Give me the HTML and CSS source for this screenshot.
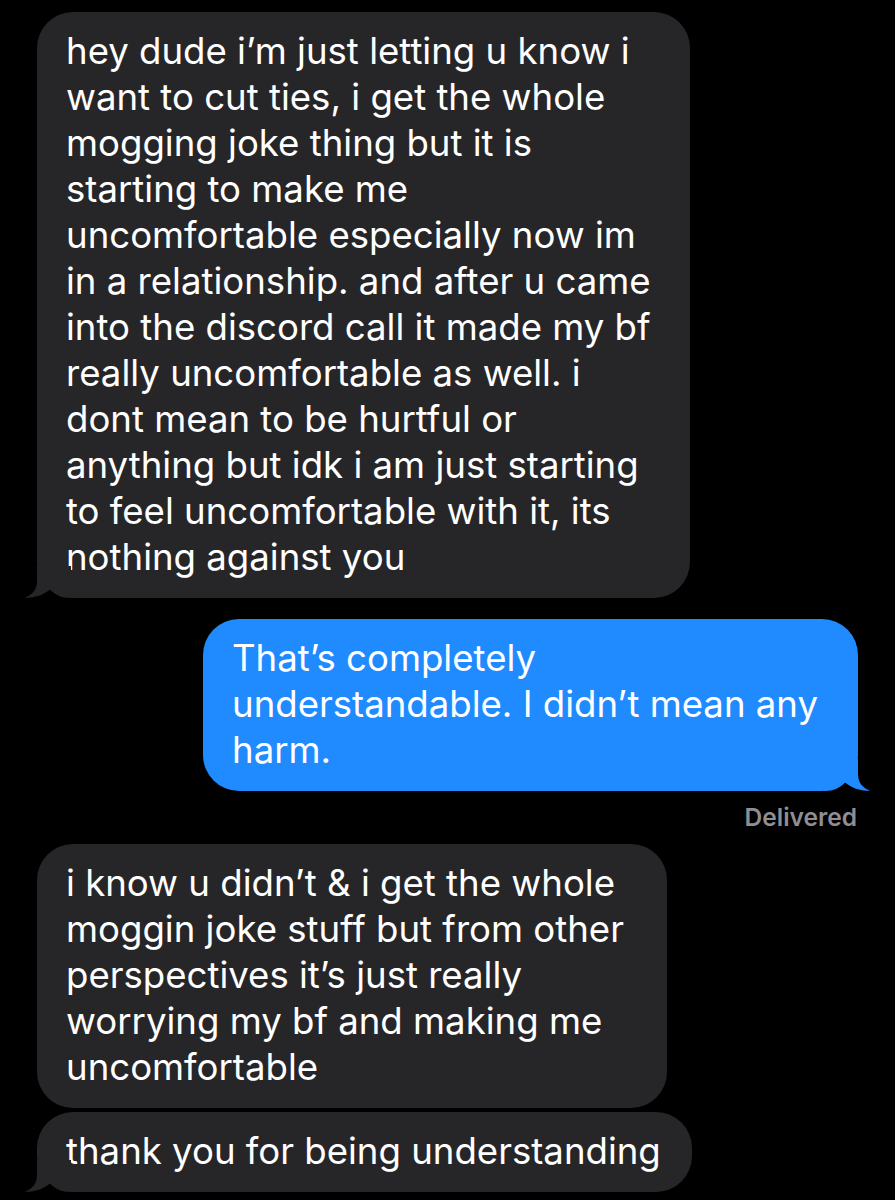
FILE: index.html
```html
<!DOCTYPE html>
<html lang="en">
<head>
    <meta charset="UTF-8">
    <meta name="viewport" content="width=device-width, initial-scale=1.0">
    <title>Messages</title>
    <link rel="stylesheet" href="styles.css">
</head>
<body>
    <div class="thread">
        <div class="bubble received msg-1">
            hey dude i’m just letting u know i<br>
            want to cut ties, i get the whole<br>
            mogging joke thing but it is<br>
            starting to make me<br>
            uncomfortable especially now im<br>
            in a relationship. and after u came<br>
            into the discord call it made my bf<br>
            really uncomfortable as well. i<br>
            dont mean to be hurtful or<br>
            anything but idk i am just starting<br>
            to feel uncomfortable with it, its<br>
            nothing against you
            <svg class="tail" viewBox="0 0 46 32"><path d="M12 0 L12 15 C12 24 7 29 0 31.5 C9 32.5 18 29 25 23.5 C30 28.5 36 32 46 32 L46 0 Z"/></svg>
        </div>

        <div class="bubble sent msg-2">
            That’s completely<br>
            understandable. I didn’t mean any<br>
            harm.
            <svg class="tail" viewBox="0 0 46 32"><path d="M12 0 L12 15 C12 24 7 29 0 31.5 C9 32.5 18 29 25 23.5 C30 28.5 36 32 46 32 L46 0 Z"/></svg>
        </div>
        <div class="status">Delivered</div>

        <div class="bubble received msg-3">
            i know u didn’t &amp; i get the whole<br>
            moggin joke stuff but from other<br>
            perspectives it’s just really<br>
            worrying my bf and making me<br>
            uncomfortable
        </div>

        <div class="bubble received msg-4">
            thank you for being understanding
            <svg class="tail" viewBox="0 0 46 32"><path d="M12 0 L12 15 C12 24 7 29 0 31.5 C9 32.5 18 29 25 23.5 C30 28.5 36 32 46 32 L46 0 Z"/></svg>
        </div>
    </div>
</body>
</html>
```

FILE: styles.css
```css
body {
    margin: 0;
    background-color: #000;
    font-family: Inter, "Noto Sans", sans-serif;
    color: #fff;
}
.thread {
    display: flex;
    flex-direction: column;
    padding: 12px 37px 0;
}
.bubble {
    position: relative;
    box-sizing: border-box;
    padding: 16px 29px 18px;
    border-radius: 36px;
    font-size: 36.6px;
    line-height: 46px;
    white-space: nowrap;
}
.received {
    align-self: flex-start;
    background-color: #262629;
}
.received .tail {
    fill: #262629;
    left: -12px;
}
.sent {
    align-self: flex-end;
    background-color: #208aff;
}
.sent .tail {
    fill: #208aff;
    right: -12px;
    transform: scaleX(-1);
}
.tail {
    position: absolute;
    bottom: 0;
    width: 46px;
    height: 32px;
}
.msg-1 {
    width: 653px;
}
.msg-2 {
    width: 655px;
    margin-top: 21px;
}
.msg-3 {
    width: 630px;
}
.msg-4 {
    width: 655px;
    margin-top: 4px;
}
.status {
    align-self: flex-end;
    margin: 13px 1px 14px 0;
    font-size: 24.5px;
    font-weight: 600;
    line-height: 26px;
    color: #8e8e93;
}
```
